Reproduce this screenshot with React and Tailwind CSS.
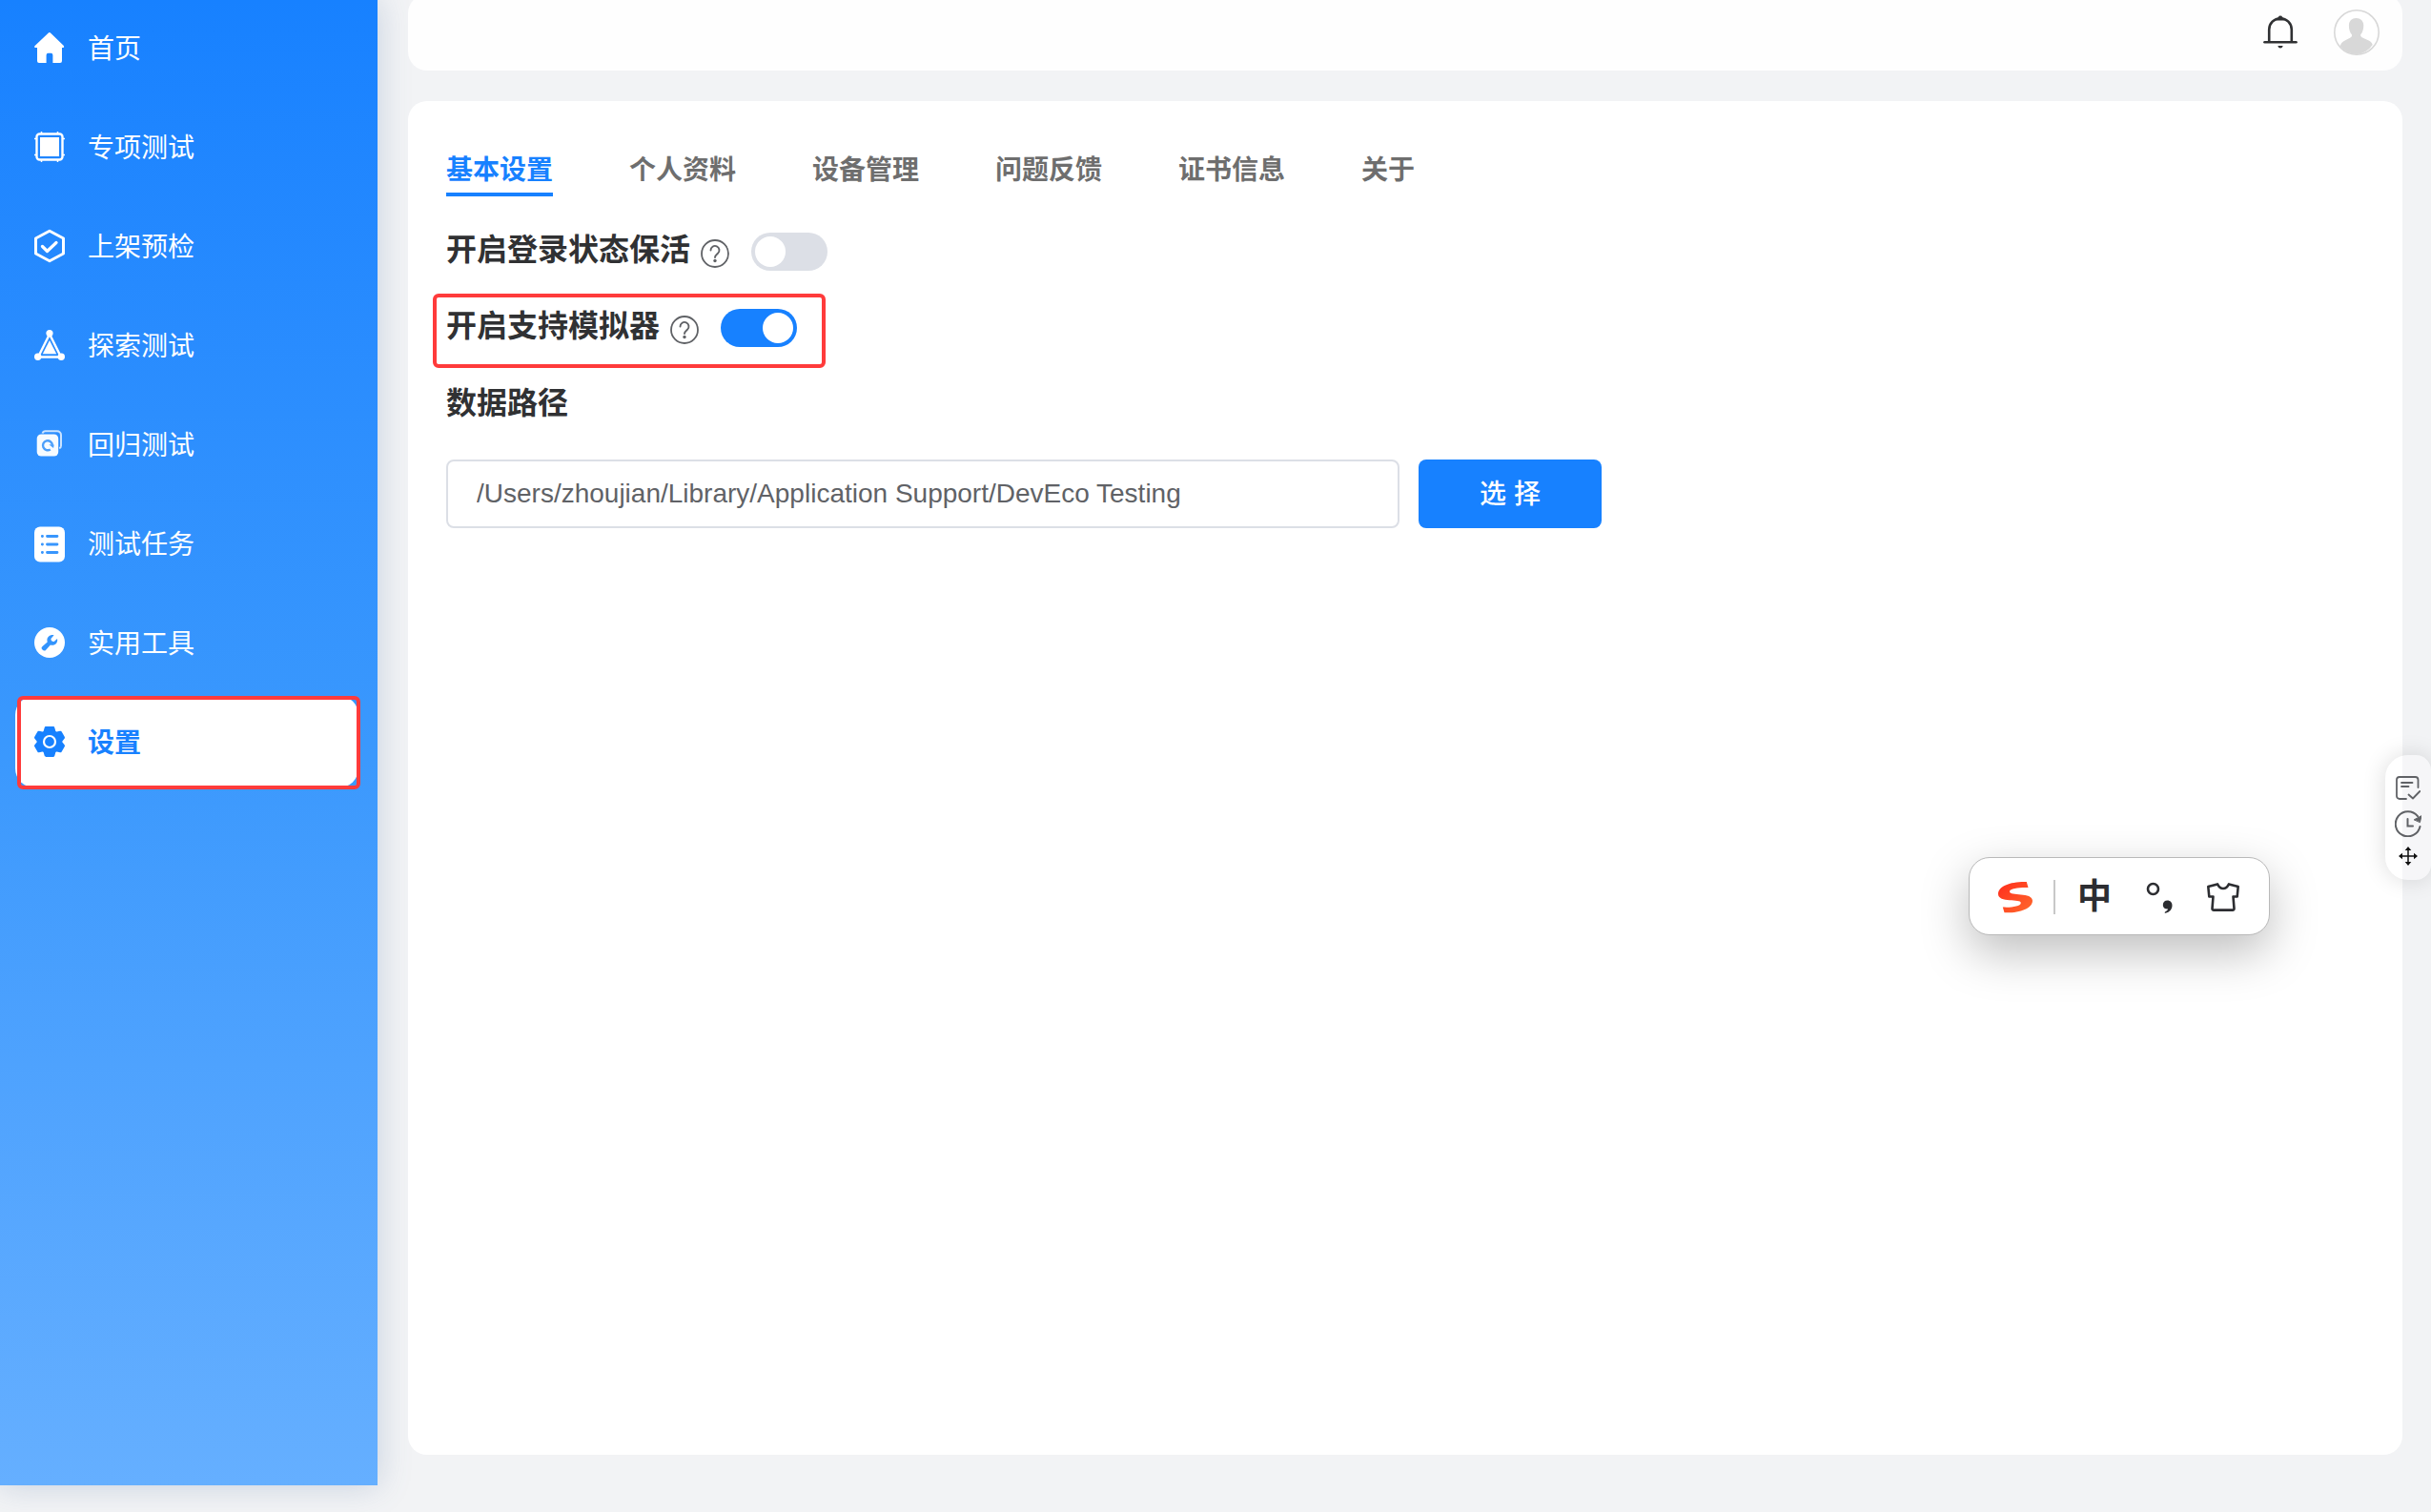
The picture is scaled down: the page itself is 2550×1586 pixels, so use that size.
import { useState } from 'react'

function HomeIcon() {
  return (
    <svg viewBox="0 0 32 32" className="size-8 shrink-0" fill="currentColor" aria-hidden="true">
      <path d="M14.6.7a1.9 1.9 0 0 1 2.6 0l13.4 13.1c1 1 .5 2.2-.8 2.2H29v14a2 2 0 0 1-2 2h-7.6v-8.200a2 2 0 0 0-2-2h-2.800a2 2 0 0 0-2 2V32H5a2 2 0 0 1-2-2V16h-1.600C0 16-.2 14.800.6 14z" />
    </svg>
  )
}

function ChipIcon() {
  return (
    <svg viewBox="0 0 32 32" className="size-8 shrink-0" fill="none" stroke="currentColor" aria-hidden="true">
      <rect x="2.500" y="2.500" width="27" height="27" rx="3" strokeWidth="2.400" />
      <rect x="6" y="6" width="20" height="20" fill="currentColor" stroke="none" />
      <path d="M7.500 0v2M24.500 0v2M7.500 30v2M24.500 30v2M0 7.500h2M0 24.500h2M30 7.500h2M30 24.500h2" strokeWidth="1.500" />
    </svg>
  )
}

function HexCheckIcon() {
  return (
    <svg viewBox="0 0 32 36" className="h-9 w-8 shrink-0" fill="none" stroke="currentColor" strokeLinejoin="round" aria-hidden="true">
      <path d="M16 2.200 30.500 10v16L16 33.800 1.500 26V10z" strokeWidth="3" />
      <path d="m8.500 18.500 5 5L23 14.500" strokeWidth="3.200" strokeLinecap="round" />
    </svg>
  )
}

function ExploreIcon() {
  return (
    <svg viewBox="0 0 32 32" className="size-8 shrink-0" fill="currentColor" aria-hidden="true">
      <path d="M16 4.500 4 28.500h24z" fill="none" stroke="currentColor" strokeWidth="2.400" />
      <path d="M16 11 8.800 25.300h14.400z" />
      <circle cx="16" cy="3.600" r="3.600" />
      <circle cx="3.700" cy="28.300" r="3.700" />
      <circle cx="28.300" cy="28.300" r="3.700" />
    </svg>
  )
}

function RegressionIcon() {
  return (
    <svg viewBox="0 0 32 32" className="size-8 shrink-0" fill="none" aria-hidden="true">
      <path d="M8.500 4.500c.5-1.500 1.500-2.300 3-2.300h12.500a4 4 0 0 1 4 4v11.300c0 1.500-.5 2.300-1.800 2.800" stroke="currentColor" strokeWidth="2" opacity=".75" />
      <rect x="2.700" y="5.500" width="22.500" height="23" rx="4.500" fill="currentColor" opacity=".96" />
      <path d="M19 16.800a5 5 0 1 0-2.200 4.600" stroke="#4b9ffb" strokeWidth="2.400" />
      <path d="m15.300 16.200 5.400.2-.6 3.600z" fill="#4b9ffb" />
    </svg>
  )
}

function TaskIcon() {
  return (
    <svg viewBox="0 0 32 40" className="h-10 w-8 shrink-0" aria-hidden="true">
      <rect x="0" y="2.500" width="32" height="37" rx="6" fill="currentColor" />
      <g stroke="#3896fd" strokeWidth="2.800" strokeLinecap="round">
        <path d="M8.300 12.500h.2M13.500 12.500h10.500M8.300 21h.2M13.500 21h10.500M8.300 29.500h.2M13.500 29.500h10.500" />
      </g>
    </svg>
  )
}

function ToolIcon() {
  return (
    <svg viewBox="0 0 32 32" className="size-8 shrink-0" aria-hidden="true">
      <circle cx="16" cy="16" r="16" fill="currentColor" />
      <path
        d="M20.600 8.300c-3.400-1-7 1.400-7.200 4.800 0 .9.100 1.600.3 2.300l-4.900 4.300a2.600 2.600 0 1 0 3.600 3.700l4.500-4.800c3.600 1 7.200-1.200 7.300-4.800 0-.7 0-1.200-.2-1.800l-3.300 3.100c-2 .2-3.300-1-3.300-3z"
        fill="#3394fd"
      />
    </svg>
  )
}

function GearIcon() {
  return (
    <svg viewBox="0 0 32 32" className="size-8 shrink-0" aria-hidden="true">
      <path
        d="M12.200 0h7.600c.8 0 1.200.4 1.500 1.200l1 3.500c.2.600.7.900 1.300.7l3.400-.6c.8-.1 1.300.1 1.700.8l3 5.200c.4.700.4 1.300-.1 1.900l-2 2.500c-.4.500-.4 1.100 0 1.600l2 2.500c.5.600.5 1.200.1 1.900l-3 5.200c-.4.700-.9.900-1.700.8l-3.400-.6c-.6-.1-1.100.1-1.300.7l-1 3.500c-.3.800-.7 1.200-1.500 1.200h-7.600c-.8 0-1.200-.4-1.500-1.200l-1-3.500c-.2-.6-.7-.8-1.300-.7l-3.400.6c-.8.1-1.300-.1-1.700-.8l-3-5.200c-.4-.7-.4-1.300.1-1.900l2-2.500c.4-.5.400-1.100 0-1.600l-2-2.500c-.5-.6-.5-1.200-.1-1.900l3-5.200c.4-.7.900-.9 1.700-.8l3.400.6c.6.200 1.100-.1 1.300-.7l1-3.500c.3-.8.700-1.200 1.500-1.200z"
        fill="currentColor"
      />
      <circle cx="16" cy="16" r="6" fill="none" stroke="#fff" strokeWidth="2.200" />
    </svg>
  )
}

function HelpIcon() {
  return (
    <svg viewBox="0 0 30 30" className="size-[30px]" fill="none" stroke="#606266" strokeLinecap="round" aria-hidden="true">
      <circle cx="15" cy="15" r="14" strokeWidth="1.800" />
      <path d="M10.500 11.500a4.500 4.500 0 1 1 7.500 3.300c-1.700 1.500-3 2.200-3 4.200" strokeWidth="1.900" />
      <circle cx="15" cy="22.500" r="1.700" fill="#606266" stroke="none" />
    </svg>
  )
}

function BellIcon() {
  return (
    <svg viewBox="0 0 36 36" className="size-9" fill="none" stroke="#303133" aria-hidden="true">
      <path d="M6.200 28V15a11.800 11.800 0 0 1 23.600 0v13" strokeWidth="2.600" />
      <path d="M1.500 28.300h33" strokeWidth="2.600" strokeLinecap="round" />
      <path d="M12.500 5.500c2-1 2.500-1.800 3.300-3.600a2.400 2.400 0 0 1 4.400 0c.8 1.800 1.300 2.600 3.300 3.600z" fill="#303133" stroke="none" />
      <path d="M15.300 32h5.400c-.5 1.700-1.400 2.500-2.700 2.500s-2.200-.8-2.700-2.500z" fill="#303133" stroke="none" />
    </svg>
  )
}

function AvatarIcon() {
  return (
    <svg viewBox="0 0 48 48" className="size-12" aria-hidden="true">
      <circle cx="24" cy="24" r="23.200" fill="#fff" stroke="#d8d8d8" strokeWidth="1.600" />
      <path
        d="M23.500 9c4.600 0 7.800 3 7.800 7.800 0 4.200-1.300 7.400-3 9.300-.4 1.500 0 2.400 1.300 3.100l7.500 3.600c1.800.9 3 2.200 3.600 4.300A22.600 22.600 0 0 1 24 47 22.600 22.600 0 0 1 6.800 38.600c.3-2.500 1.800-4.400 4-5.600l6.600-3.500c1.500-.8 2-1.800 1.500-3.200-1.900-2-3-5.300-3-9.500C15.900 12 19 9 23.500 9z"
        fill="#d8d8d8"
      />
    </svg>
  )
}

const menu = [
  { label: '首页', Icon: HomeIcon },
  { label: '专项测试', Icon: ChipIcon },
  { label: '上架预检', Icon: HexCheckIcon },
  { label: '探索测试', Icon: ExploreIcon },
  { label: '回归测试', Icon: RegressionIcon },
  { label: '测试任务', Icon: TaskIcon },
  { label: '实用工具', Icon: ToolIcon },
  { label: '设置', Icon: GearIcon, active: true },
]

const tabs = ['基本设置', '个人资料', '设备管理', '问题反馈', '证书信息', '关于']

function Sidebar() {
  return (
    <aside className="mb-7 w-[396px] shrink-0 bg-linear-to-b from-[#1781ff] via-[#3a98fd] to-[#65afff] pt-0.5 pr-5 pl-4 shadow-[0_0_32px_rgba(80,115,165,0.28)]">
      <nav className="flex flex-col gap-2">
        {menu.map(({ label, Icon, active }) => (
          <a
            key={label}
            href="#"
            className={`relative flex h-24 items-center gap-6 rounded-[20px] pl-5 text-[28px] ${active ? 'bg-white font-bold text-[#1781ff]' : 'text-white'}`}
          >
            <Icon />
            <span className="pt-1">{label}</span>
            {active && <span className="absolute top-0 -right-0.5 -bottom-0.5 left-0.5 rounded-md border-4 border-[#ff3b3b]" />}
          </a>
        ))}
      </nav>
    </aside>
  )
}

function SwitchRow({ id, label, checked, onChange, marked }) {
  return (
    <div className="relative flex h-20 items-center">
      <label htmlFor={id} className="pb-1 text-[32px] leading-10 font-bold text-[#303133]">
        {label}
      </label>
      <button type="button" aria-label="帮助" className="mt-1 ml-[11px]">
        <HelpIcon />
      </button>
      <input
        id={id}
        type="checkbox"
        role="switch"
        checked={checked}
        onChange={(e) => onChange(e.target.checked)}
        className="ml-[23px] h-10 w-20 appearance-none rounded-full bg-[#dcdfe6] p-1 before:block before:size-8 before:rounded-full before:bg-white checked:bg-[#1781ff] checked:before:ml-10"
      />
      {marked && <span className="pointer-events-none absolute top-1 -left-3.5 h-[78px] w-[412px] rounded-md border-4 border-[#ff3b3b]" />}
    </div>
  )
}

function SideTools() {
  return (
    <div className="absolute top-[792px] right-0 flex h-[131px] w-12 flex-col items-center gap-2.5 rounded-l-3xl rounded-r-2xl bg-white/30 pt-[22px] shadow-[0_0_24px_rgba(0,0,0,0.14)]">
      <button type="button" aria-label="记录">
        <svg viewBox="0 0 26 26" className="size-[26px]" fill="none" stroke="#606266" strokeWidth="1.800" strokeLinecap="round" strokeLinejoin="round" aria-hidden="true">
          <path d="M11 24H4a3 3 0 0 1-3-3V4a3 3 0 0 1 3-3h16.500a3 3 0 0 1 3 3v8M6 7h11.500M6 11h7.500M13.500 19.500l4.500 4 7.300-7.500" />
        </svg>
      </button>
      <button type="button" aria-label="历史">
        <svg viewBox="0 0 28 28" className="size-7" fill="none" stroke="#606266" strokeWidth="2" strokeLinecap="round" aria-hidden="true">
          <path d="M26.500 17A13 13 0 1 1 24 6.200" />
          <path d="M13.500 9v7.500h5.500" />
          <path d="m20.500 9.700 7.500-4-1.500 6.600z" fill="#606266" strokeWidth="1" />
        </svg>
      </button>
      <button type="button" aria-label="移动">
        <svg viewBox="0 0 20 20" className="size-5" fill="#111" stroke="#111" aria-hidden="true">
          <path d="M10 3v14M3 10h14" strokeWidth="1.500" />
          <path d="m10 0 3.300 4H6.700zM10 20l-3.300-4h6.600zM0 10l4-3.300v6.600zM20 10l-4 3.300V6.700z" stroke="none" />
        </svg>
      </button>
    </div>
  )
}

function InputMethodBar() {
  return (
    <div className="absolute top-[899px] right-[169px] flex h-[82px] w-[316px] items-center rounded-[22px] border border-[#b9b9b9] bg-white pt-0.5 pl-[30px] text-[#2c2d31] shadow-[0_18px_50px_rgba(0,0,0,0.26)]">
      <svg viewBox="0 0 36 33" className="h-[33px] w-9" aria-hidden="true">
        <defs>
          <linearGradient id="ime" x1="0" y1="0" x2="1" y2="1">
            <stop offset="0" stopColor="#ff2c1c" />
            <stop offset="1" stopColor="#ff6a2c" />
          </linearGradient>
        </defs>
        <path
          d="M29.800.1 31.500 6c-7-.3-19.500.3-19.500 4.200 0 5 24 .3 24 9.500 0 8.600-14.500 13.300-29.500 12.600L4.800 26.500c8 .6 19-.7 19-4.600C23.800 17.400 0 22.200 0 13 0 4.500 13-.4 29.800.1z"
          fill="url(#ime)"
        />
      </svg>
      <span className="ml-[22px] h-9 w-0.5 bg-[#c8c8c8]" />
      <button type="button" className="ml-[23px] text-[36px] leading-10 font-bold">
        中
      </button>
      <button type="button" aria-label="标点" className="ml-9">
        <svg viewBox="0 0 28 33" className="h-[33px] w-7" fill="none" aria-hidden="true">
          <circle cx="7.500" cy="7.500" r="5.500" stroke="currentColor" strokeWidth="2.600" />
          <path d="M22.500 19.500c3 0 5 2.200 5 5.200 0 4-2.700 7-6.800 8-1 .2-1.500-.8-.6-1.300 1.500-.7 2.500-1.500 3-2.800-3.200.2-5.300-1.700-5.300-4.400 0-2.800 2-4.700 4.700-4.700z" fill="currentColor" />
        </svg>
      </button>
      <button type="button" aria-label="皮肤" className="ml-9">
        <svg viewBox="0 0 34 30" className="h-[30px] w-[34px]" fill="none" stroke="currentColor" strokeWidth="2.600" strokeLinejoin="round" aria-hidden="true">
          <path d="M11 1.400 1.300 4l1 10.500h4.200l-1 12.600q0 1.500 1.600 1.500h19.800q1.600 0 1.600-1.500l-1-12.600h4.200L32.700 4 23 1.400C21.500 4.500 19.500 6 17 6s-4.500-1.500-6-4.600z" />
        </svg>
      </button>
    </div>
  )
}

export default function App() {
  const [keepAlive, setKeepAlive] = useState(false)
  const [emulator, setEmulator] = useState(true)
  const [path, setPath] = useState('/Users/zhoujian/Library/Application Support/DevEco Testing')

  return (
    <div className="relative flex min-h-screen overflow-hidden bg-[#f2f3f5] font-['Liberation_Sans','Noto_Sans_CJK_SC',sans-serif]">
      <Sidebar />

      <div className="relative mr-[30px] mb-[60px] ml-8 flex flex-1 flex-col gap-8">
        <header className="-mt-1.5 flex h-20 items-center justify-end gap-[38px] rounded-[20px] bg-white/90 pr-6">
          <button type="button" aria-label="通知">
            <BellIcon />
          </button>
          <button type="button" aria-label="用户">
            <AvatarIcon />
          </button>
        </header>

        <main className="flex-1 rounded-[20px] bg-white px-10 pt-[52px]">
          <nav className="mb-[18px] flex gap-20 text-[28px] leading-[42px] font-bold">
            {tabs.map((tab, i) => (
              <a
                key={tab}
                href="#"
                className={`border-b-4 pb-0.5 ${i === 0 ? 'border-[#1781ff] text-[#1781ff]' : 'border-transparent text-[#6e6e6e]'}`}
              >
                {tab}
              </a>
            ))}
          </nav>

          <SwitchRow id="keep-alive" label="开启登录状态保活" checked={keepAlive} onChange={setKeepAlive} />
          <SwitchRow id="emulator" label="开启支持模拟器" checked={emulator} onChange={setEmulator} marked />

          <label htmlFor="data-path" className="flex h-[78px] items-center text-[32px] font-bold text-[#303133]">
            数据路径
          </label>
          <div className="mt-5 flex gap-5">
            <input
              id="data-path"
              value={path}
              onChange={(e) => setPath(e.target.value)}
              className="h-[72px] w-[1000px] rounded-lg border-2 border-[#dcdfe6] px-[30px] text-[28px] text-[#606266] outline-none"
            />
            <button type="button" className="h-[72px] w-48 rounded-lg bg-[#1781ff] pt-0.5 text-[28px] font-medium text-white">
              选 择
            </button>
          </div>
        </main>
      </div>

      <SideTools />
      <InputMethodBar />
    </div>
  )
}
